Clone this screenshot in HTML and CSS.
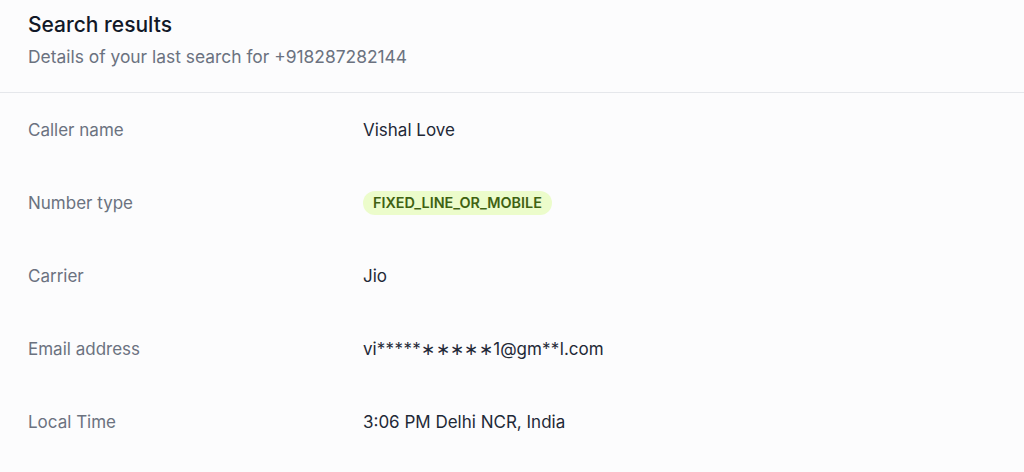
FILE: index.html
```html
<!DOCTYPE html>
<html lang="en">
<head>
<meta charset="utf-8">
<link rel="stylesheet" href="styles.css">
</head>
<body>
<div class="card">
  <div class="head">
    <h3 class="title">Search results</h3>
    <p class="sub">Details of your last search for +918287282144</p>
  </div>
  <dl class="list">
    <div class="row"><dt>Caller name</dt><dd>Vishal Love</dd></div>
    <div class="row"><dt>Number type</dt><dd><span class="badge">FIXED_LINE_OR_MOBILE</span></dd></div>
    <div class="row"><dt>Carrier</dt><dd>Jio</dd></div>
    <div class="row"><dt>Email address</dt><dd>vi<span class="mask">*****∗∗∗∗∗</span>1@gm<span class="mask">**</span>l.com</dd></div>
    <div class="row"><dt>Local Time</dt><dd>3:06 PM Delhi NCR, India</dd></div>
  </dl>
</div>
</body>
</html>
```
FILE: styles.css
```css
html, body { margin: 0; padding: 0; background: #fcfcfd; }
body { font-family: Inter, "Noto Sans", sans-serif; color: #111827; }
.card { width: 1024px; }
.head { padding: 11px 28px 23px; border-bottom: 1px solid #e5e7eb; }
.title { margin: 0; font-size: 21px; line-height: 28px; font-weight: 500; color: #111827; }
.sub { margin: 6px 0 0; font-size: 17.4px; line-height: 24px; color: #6b7280; }
.list { margin: 0; padding: 0; }
.row { display: grid; grid-template-columns: 335px 1fr; align-items: center; height: 73px; padding: 0 28px; }
dt { font-size: 17px; color: #6b7280; line-height: 24px; }
dd { margin: 0; font-size: 17px; color: #1f2937; line-height: 24px; }
.mask { letter-spacing: 0.4px; }
.badge { display: inline-block; background: #ecfccb; color: #3f6212; font-size: 14.4px; font-weight: 600; line-height: 24px; padding: 0 10px; border-radius: 999px; }
```
